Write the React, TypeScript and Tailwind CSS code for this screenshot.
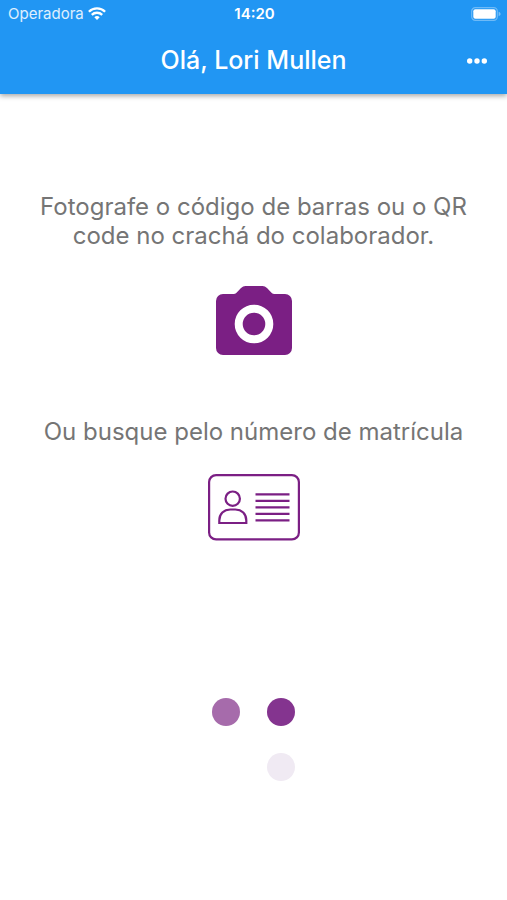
const LOADER_DOTS = [
  { id: "top-left", color: "bg-[#a66bab]" },
  { id: "top-right", color: "bg-[#84348f]" },
  { id: "bottom-left", color: "bg-transparent" },
  { id: "bottom-right", color: "bg-[#f0eaf3]" },
];

function WifiIcon() {
  return (
    <svg viewBox="0 0 18 14" className="h-3.5 w-[18px]" fill="none" stroke="currentColor" strokeWidth="2.3" aria-hidden="true">
      <path d="M0.9 4.7a11.5 11.5 0 0 1 16.2 0" />
      <path d="M3.8 7.9a7.4 7.4 0 0 1 10.4 0" />
      <path d="M6.3 10.3a3.9 3.9 0 0 1 5.4 0L9 13.1z" fill="currentColor" stroke="none" />
    </svg>
  );
}

function BatteryIcon() {
  return (
    <svg viewBox="0 0 30 14" className="h-3.5 w-[30px]" aria-hidden="true">
      <rect x="0.7" y="0.7" width="25.6" height="12.6" rx="3.6" fill="none" stroke="#fff" strokeOpacity="0.35" strokeWidth="1.2" />
      <rect x="2.3" y="2.3" width="22.4" height="9.4" rx="2" fill="#fff" />
      <path d="M27.6 4.8c1.3.4 2 1.2 2 2.2s-.7 1.8-2 2.2z" fill="#fff" fillOpacity="0.4" />
    </svg>
  );
}

function CameraIcon() {
  return (
    <svg viewBox="0 0 76 69" className="h-[69px] w-[76px]" aria-hidden="true">
      <path
        d="M7 8h10.500q1.800 0 3-1.200l4.500-4.800Q27 0 29.500 0h17q2.500 0 4.500 2l4.500 4.800q1.200 1.200 3 1.200H69a7 7 0 0 1 7 7v47a7 7 0 0 1-7 7H7a7 7 0 0 1-7-7V15a7 7 0 0 1 7-7z"
        fill="#7b1f84"
      />
      <circle cx="38" cy="38" r="15.3" fill="none" stroke="#fff" strokeWidth="8" />
    </svg>
  );
}

function BadgeIcon() {
  return (
    <svg viewBox="0 0 92 67" className="h-[67px] w-[92px]" fill="none" stroke="#7b1f84" strokeWidth="2.2" aria-hidden="true">
      <rect x="1.1" y="1.1" width="89.8" height="64.3" rx="7" />
      <circle cx="24.7" cy="24.7" r="7.2" />
      <path d="M11.3 49v-2.500c0-6.500 4.500-11 11-11h5c6.500 0 11 4.500 11 11V49z" />
      <path d="M47.500 20.300h34M47.500 26.800h34M47.500 33.300h34M47.500 39.800h34M47.500 46.300h34" />
    </svg>
  );
}

function Header() {
  return (
    <header className="relative bg-[#2196f3] text-white shadow-[0_2px_5px_rgba(0,0,0,0.35)]">
      <div className="grid h-7 grid-cols-3 items-center pl-2 pr-1.5">
        <div className="flex items-center gap-1 text-[15px] text-white/85">
          <span>Operadora</span>
          <span className="text-white">
            <WifiIcon />
          </span>
        </div>
        <span className="text-center text-[15px] font-semibold">14:20</span>
        <div className="flex justify-end">
          <BatteryIcon />
        </div>
      </div>
      <div className="grid h-[66px] grid-cols-[60px_1fr_60px] items-center pb-px">
        <h1 className="col-start-2 text-center text-[25px] font-medium">Olá, Lori Mullen</h1>
        <button type="button" aria-label="Mais opções" className="flex h-full items-center justify-center">
          <svg viewBox="0 0 20 6" className="h-1.5 w-5" fill="currentColor" aria-hidden="true">
            <circle cx="2.7" cy="3" r="2.7" />
            <circle cx="10" cy="3" r="2.7" />
            <circle cx="17.3" cy="3" r="2.7" />
          </svg>
        </button>
      </div>
    </header>
  );
}

export default function App() {
  return (
    <div className="flex min-h-screen flex-col bg-white font-['Inter',sans-serif]">
      <Header />
      <main className="flex flex-col items-center px-8 pt-[98px] text-center text-2xl leading-[29px] text-[#757575]">
        <p>Fotografe o código de barras ou o QR code no crachá do colaborador.</p>
        <button type="button" aria-label="Fotografar crachá" className="mt-9">
          <CameraIcon />
        </button>
        <p className="mt-[62px]">Ou busque pelo número de matrícula</p>
        <button type="button" aria-label="Buscar pelo número de matrícula" className="mt-7">
          <BadgeIcon />
        </button>
        {/* Loading indicator */}
        <div role="status" aria-label="Carregando" className="mt-[157px] grid grid-cols-2 gap-[27px]">
          {LOADER_DOTS.map((dot) => (
            <span key={dot.id} className={`size-7 rounded-full ${dot.color}`} />
          ))}
        </div>
      </main>
    </div>
  );
}
